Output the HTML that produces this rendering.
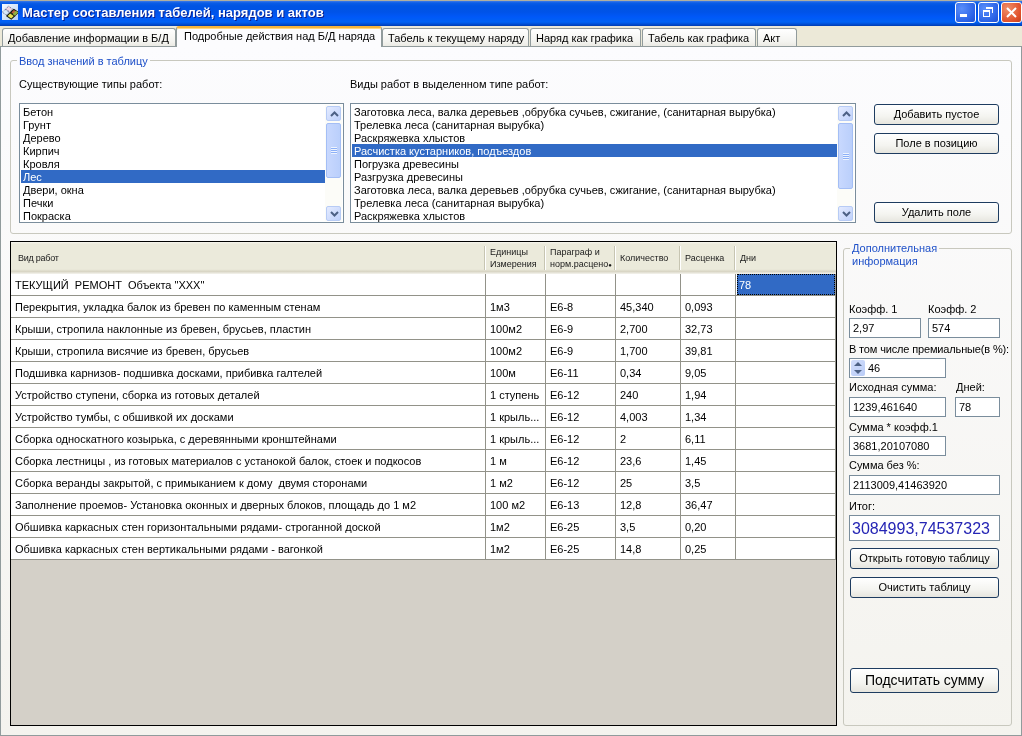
<!DOCTYPE html>
<html><head><meta charset="utf-8">
<style>
*{box-sizing:border-box;margin:0;padding:0}
html,body{will-change:transform;width:1022px;height:736px;overflow:hidden;background:#ECE9D8;font-family:"Liberation Sans",sans-serif;font-size:11px;color:#000;position:relative}
.a{position:absolute;white-space:nowrap}
#title{left:0;top:0;width:1022px;height:26px;background:linear-gradient(#B0AFA0 0,#B0AFA0 1px,#3D7BE8 1px,#0A5CE6 3px,#0054E3 6px,#0053E8 12px,#0058F8 17px,#0062F4 22px,#0050D8 24px,#003CB0 26px)}
#title .t{left:22px;top:5px;color:#fff;font-weight:bold;font-size:13px;text-shadow:1px 1px 0 #0A1E8C}
.wb{top:2px;width:21px;height:21px;border:1px solid #fff;border-radius:3px;background:radial-gradient(circle at 30% 30%,#5A8EFA,#2A62E6 70%,#2050D0)}
.wbx{background:radial-gradient(circle at 30% 30%,#F0906A,#E0502A 70%,#C0401E)}
#tabs{left:0;top:26px;width:1022px;height:21px}
.tab{position:absolute;top:2px;height:19px;border:1px solid #919B9C;border-bottom:none;border-radius:3px 3px 0 0;background:linear-gradient(#FFFFFF,#F3F3EF 70%,#E9E8E1);padding-left:5px;line-height:18px}
.tab.sel{top:0;height:21px;background:#FCFCFE;border-top:2px solid #F5B43C;box-shadow:inset 0 1px 0 #FFD880;line-height:17px;padding-left:7px;z-index:3}
#panel{left:0;top:46px;width:1022px;height:690px;background:linear-gradient(#FCFCFE,#F4F3EE);border:1px solid #919B9C}
.grp{position:absolute;border:1px solid #C8C8BE;border-radius:3px}
.gt{position:absolute;color:#1E50C8;background:#FCFCFE;padding:0 2px}
.lb{position:absolute;background:#fff;border:1px solid #7A8D9C;overflow:hidden}
.li{position:absolute;left:3px;height:13px;line-height:14px}
.li.s{background:#316AC5;color:#fff;left:1px;padding-left:2px}
.sb{position:absolute;top:1px;bottom:1px;width:17px;background:#FCFCF8}
.arr{position:absolute;left:1px;width:15px;height:15px;border:1px solid #B7CBF5;border-radius:2px;background:linear-gradient(135deg,#E4EBFF,#C0D2FC)}
.thumb{position:absolute;left:1px;width:15px;border:1px solid #A4BEF5;border-radius:2px;background:linear-gradient(90deg,#C8D8FE,#BACFFB)}
.btn{position:absolute;border:1px solid #1E3C60;border-radius:3px;background:linear-gradient(#FFFFFF,#F4F4F0 60%,#E6E5DE);text-align:center;line-height:18px}
.tb{position:absolute;background:#fff;border:1px solid #7A8D9C;padding-left:3px;line-height:19px}
#grid{left:10px;top:241px;width:827px;height:485px;background:#D4D0C8;border:1px solid #000}
.hd{position:absolute;top:0;height:32px;background:linear-gradient(#F6F5EE,#EBEADB 2px,#EBEADB 85%,#D8D5C4 92%,#F5F4EE);font-size:9px;color:#1a1a1a}
.hs{position:absolute;top:4px;width:1px;height:24px;background:#C7C5B2;box-shadow:1px 0 0 #FFFFFF}
.row{position:absolute;left:0;width:825px;height:22px;background:#fff;border-bottom:1px solid #929289}
.c{position:absolute;top:0;height:21px;line-height:23px;border-right:1px solid #929289;padding-left:4px;overflow:hidden}
.selc{position:absolute;left:1px;top:0;width:98px;height:21px;background:#316AC5;color:#fff;padding-left:2px;outline:1px dotted #000;outline-offset:-1px}
</style></head><body>
<div id="title" class="a">
  <svg class="a" style="left:2px;top:4px" width="16" height="16">
    <defs><linearGradient id="ig" x1="0" y1="0" x2="1" y2="1"><stop offset="0" stop-color="#F8FBFF"/><stop offset="1" stop-color="#B4CEF4"/></linearGradient></defs>
    <rect x="0" y="0" width="16" height="16" fill="url(#ig)"/>
    <g transform="translate(8.5 8.5) rotate(35) skewX(-12)">
      <rect x="-6" y="-4" width="5" height="4" fill="#F0D8E0" stroke="#3A3A6A" stroke-width="0.7" stroke-dasharray="1 1"/>
      <rect x="-6" y="0.5" width="5" height="4" fill="#D8E8F8" stroke="#3A3A6A" stroke-width="0.7" stroke-dasharray="1 1"/>
      <rect x="0" y="-4.5" width="5.5" height="4.5" fill="#C06040" stroke="#141A10" stroke-width="1.1"/>
      <rect x="0" y="0.5" width="5.5" height="4.5" fill="#E8E050" stroke="#141A10" stroke-width="1.1"/>
      <rect x="2.5" y="-4.5" width="3" height="4.5" fill="#90B040"/>
    </g>
  </svg>
  <div class="a t">Мастер составления табелей, нарядов и актов</div>
  <div class="a wb" style="left:955px"></div>
  <div class="a" style="left:960px;top:14px;width:7px;height:3px;background:#fff"></div>
  <div class="a wb" style="left:978px"></div>
  <div class="a" style="left:983px;top:10px;width:7px;height:7px;border:1px solid #fff;border-top-width:2px"></div>
  <div class="a" style="left:986px;top:7px;width:7px;height:6px;border:1px solid #fff;border-top-width:2px;border-left:none;border-bottom:none"></div>
  <div class="a wb wbx" style="left:1001px"></div>
  <svg class="a" style="left:1001px;top:2px" width="21" height="21"><path d="M6 6 L15 15 M15 6 L6 15" stroke="#fff" stroke-width="2"/></svg>
</div>
<div id="tabs" class="a">
  <div class="tab" style="left:2px;width:174px">Добавление информации в Б/Д</div>
  <div class="tab sel" style="left:176px;width:206px">Подробные действия над Б/Д наряда</div>
  <div class="tab" style="left:382px;width:147px">Табель к текущему наряду</div>
  <div class="tab" style="left:530px;width:111px">Наряд как графика</div>
  <div class="tab" style="left:642px;width:114px">Табель как графика</div>
  <div class="tab" style="left:757px;width:40px">Акт</div>
</div>
<div id="panel" class="a"></div>

<!-- group 1 -->
<div class="grp" style="left:10px;top:60px;width:1002px;height:174px"></div>
<div class="gt a" style="left:17px;top:55px">Ввод значений в таблицу</div>
<div class="a" style="left:19px;top:78px">Существующие типы работ:</div>
<div class="a" style="left:350px;top:78px">Виды работ в выделенном типе работ:</div>

<div class="lb" style="left:19px;top:103px;width:325px;height:120px">
  <div class="li" style="top:1px">Бетон</div>
  <div class="li" style="top:14px">Грунт</div>
  <div class="li" style="top:27px">Дерево</div>
  <div class="li" style="top:40px">Кирпич</div>
  <div class="li" style="top:53px">Кровля</div>
  <div class="li s" style="top:66px;width:304px">Лес</div>
  <div class="li" style="top:79px">Двери, окна</div>
  <div class="li" style="top:92px">Печки</div>
  <div class="li" style="top:105px">Покраска</div>
  <div class="sb" style="right:1px">
    <div class="arr" style="top:1px"><svg class="a" style="left:3px;top:4px" width="9" height="6"><path d="M1 5 L4.5 1.5 L8 5" fill="none" stroke="#4D6185" stroke-width="2"/></svg></div>
    <div class="thumb" style="top:18px;height:55px"><div class="a" style="left:4px;top:23px;width:6px;height:7px;background:repeating-linear-gradient(#EEF4FE 0 1px,#8CB0F8 1px 2px)"></div></div>
    <div class="arr" style="bottom:0px"><svg class="a" style="left:3px;top:4px" width="9" height="6"><path d="M1 1 L4.5 4.5 L8 1" fill="none" stroke="#4D6185" stroke-width="2"/></svg></div>
  </div>
</div>

<div class="lb" style="left:350px;top:103px;width:506px;height:120px">
  <div class="li" style="top:1px">Заготовка леса, валка деревьев ,обрубка сучьев, сжигание, (санитарная вырубка)</div>
  <div class="li" style="top:14px">Трелевка леса (санитарная вырубка)</div>
  <div class="li" style="top:27px">Раскряжевка хлыстов</div>
  <div class="li s" style="top:40px;width:486px">Расчистка кустарников, подъездов</div>
  <div class="li" style="top:53px">Погрузка древесины</div>
  <div class="li" style="top:66px">Разгрузка древесины</div>
  <div class="li" style="top:79px">Заготовка леса, валка деревьев ,обрубка сучьев, сжигание, (санитарная вырубка)</div>
  <div class="li" style="top:92px">Трелевка леса (санитарная вырубка)</div>
  <div class="li" style="top:105px">Раскряжевка хлыстов</div>
  <div class="sb" style="right:1px">
    <div class="arr" style="top:1px"><svg class="a" style="left:3px;top:4px" width="9" height="6"><path d="M1 5 L4.5 1.5 L8 5" fill="none" stroke="#4D6185" stroke-width="2"/></svg></div>
    <div class="thumb" style="top:18px;height:66px"><div class="a" style="left:4px;top:29px;width:6px;height:7px;background:repeating-linear-gradient(#EEF4FE 0 1px,#8CB0F8 1px 2px)"></div></div>
    <div class="arr" style="bottom:0px"><svg class="a" style="left:3px;top:4px" width="9" height="6"><path d="M1 1 L4.5 4.5 L8 1" fill="none" stroke="#4D6185" stroke-width="2"/></svg></div>
  </div>
</div>

<div class="btn" style="left:874px;top:104px;width:125px;height:21px">Добавить пустое</div>
<div class="btn" style="left:874px;top:133px;width:125px;height:21px">Поле в позицию</div>
<div class="btn" style="left:874px;top:202px;width:125px;height:21px">Удалить поле</div>

<!-- grid -->
<div id="grid" class="a">
  <div class="hd" style="left:0;width:825px;height:32px">
    <div class="a" style="left:7px;top:11px;letter-spacing:-0.25px">Вид работ</div>
    <div class="hs" style="left:473px"></div>
    <div class="a" style="left:479px;top:4px;line-height:12px">Единицы<br>Измерения</div>
    <div class="hs" style="left:533px"></div>
    <div class="a" style="left:539px;top:4px;line-height:12px;width:64px;overflow:hidden">Параграф и<br>норм.расцено<span style="font-size:6px">●</span></div>
    <div class="hs" style="left:603px"></div>
    <div class="a" style="left:609px;top:11px">Количество</div>
    <div class="hs" style="left:668px"></div>
    <div class="a" style="left:674px;top:11px">Расценка</div>
    <div class="hs" style="left:723px"></div>
    <div class="a" style="left:729px;top:11px">Дни</div>
  </div>
<div class="row" style="top:32px">
<div class="c" style="left:0px;width:475px;padding-left:4px">ТЕКУЩИЙ&nbsp; РЕМОНТ&nbsp; Объекта "XXX"</div>
<div class="c" style="left:475px;width:60px"></div>
<div class="c" style="left:535px;width:70px"></div>
<div class="c" style="left:605px;width:65px"></div>
<div class="c" style="left:670px;width:55px"></div>
<div class="c" style="left:725px;width:100px"><div class="selc">78</div></div>
</div>
<div class="row" style="top:54px">
<div class="c" style="left:0px;width:475px;padding-left:4px">Перекрытия, укладка балок из бревен по каменным стенам</div>
<div class="c" style="left:475px;width:60px">1м3</div>
<div class="c" style="left:535px;width:70px">Е6-8</div>
<div class="c" style="left:605px;width:65px">45,340</div>
<div class="c" style="left:670px;width:55px">0,093</div>
<div class="c" style="left:725px;width:100px"></div>
</div>
<div class="row" style="top:76px">
<div class="c" style="left:0px;width:475px;padding-left:4px">Крыши, стропила наклонные из бревен, брусьев, пластин</div>
<div class="c" style="left:475px;width:60px">100м2</div>
<div class="c" style="left:535px;width:70px">Е6-9</div>
<div class="c" style="left:605px;width:65px">2,700</div>
<div class="c" style="left:670px;width:55px">32,73</div>
<div class="c" style="left:725px;width:100px"></div>
</div>
<div class="row" style="top:98px">
<div class="c" style="left:0px;width:475px;padding-left:4px">Крыши, стропила висячие из бревен, брусьев</div>
<div class="c" style="left:475px;width:60px">100м2</div>
<div class="c" style="left:535px;width:70px">Е6-9</div>
<div class="c" style="left:605px;width:65px">1,700</div>
<div class="c" style="left:670px;width:55px">39,81</div>
<div class="c" style="left:725px;width:100px"></div>
</div>
<div class="row" style="top:120px">
<div class="c" style="left:0px;width:475px;padding-left:4px">Подшивка карнизов- подшивка досками, прибивка галтелей</div>
<div class="c" style="left:475px;width:60px">100м</div>
<div class="c" style="left:535px;width:70px">Е6-11</div>
<div class="c" style="left:605px;width:65px">0,34</div>
<div class="c" style="left:670px;width:55px">9,05</div>
<div class="c" style="left:725px;width:100px"></div>
</div>
<div class="row" style="top:142px">
<div class="c" style="left:0px;width:475px;padding-left:4px">Устройство ступени, сборка из готовых деталей</div>
<div class="c" style="left:475px;width:60px">1 ступень</div>
<div class="c" style="left:535px;width:70px">Е6-12</div>
<div class="c" style="left:605px;width:65px">240</div>
<div class="c" style="left:670px;width:55px">1,94</div>
<div class="c" style="left:725px;width:100px"></div>
</div>
<div class="row" style="top:164px">
<div class="c" style="left:0px;width:475px;padding-left:4px">Устройство тумбы, с обшивкой их досками</div>
<div class="c" style="left:475px;width:60px">1 крыль...</div>
<div class="c" style="left:535px;width:70px">Е6-12</div>
<div class="c" style="left:605px;width:65px">4,003</div>
<div class="c" style="left:670px;width:55px">1,34</div>
<div class="c" style="left:725px;width:100px"></div>
</div>
<div class="row" style="top:186px">
<div class="c" style="left:0px;width:475px;padding-left:4px">Сборка односкатного козырька, с деревянными кронштейнами</div>
<div class="c" style="left:475px;width:60px">1 крыль...</div>
<div class="c" style="left:535px;width:70px">Е6-12</div>
<div class="c" style="left:605px;width:65px">2</div>
<div class="c" style="left:670px;width:55px">6,11</div>
<div class="c" style="left:725px;width:100px"></div>
</div>
<div class="row" style="top:208px">
<div class="c" style="left:0px;width:475px;padding-left:4px">Сборка лестницы , из готовых материалов с устанокой балок, стоек и подкосов</div>
<div class="c" style="left:475px;width:60px">1 м</div>
<div class="c" style="left:535px;width:70px">Е6-12</div>
<div class="c" style="left:605px;width:65px">23,6</div>
<div class="c" style="left:670px;width:55px">1,45</div>
<div class="c" style="left:725px;width:100px"></div>
</div>
<div class="row" style="top:230px">
<div class="c" style="left:0px;width:475px;padding-left:4px">Сборка веранды закрытой, с примыканием к дому&nbsp; двумя сторонами</div>
<div class="c" style="left:475px;width:60px">1 м2</div>
<div class="c" style="left:535px;width:70px">Е6-12</div>
<div class="c" style="left:605px;width:65px">25</div>
<div class="c" style="left:670px;width:55px">3,5</div>
<div class="c" style="left:725px;width:100px"></div>
</div>
<div class="row" style="top:252px">
<div class="c" style="left:0px;width:475px;padding-left:4px">Заполнение проемов- Установка оконных и дверных блоков, площадь до 1 м2</div>
<div class="c" style="left:475px;width:60px">100 м2</div>
<div class="c" style="left:535px;width:70px">Е6-13</div>
<div class="c" style="left:605px;width:65px">12,8</div>
<div class="c" style="left:670px;width:55px">36,47</div>
<div class="c" style="left:725px;width:100px"></div>
</div>
<div class="row" style="top:274px">
<div class="c" style="left:0px;width:475px;padding-left:4px">Обшивка каркасных стен горизонтальными рядами- строганной доской</div>
<div class="c" style="left:475px;width:60px">1м2</div>
<div class="c" style="left:535px;width:70px">Е6-25</div>
<div class="c" style="left:605px;width:65px">3,5</div>
<div class="c" style="left:670px;width:55px">0,20</div>
<div class="c" style="left:725px;width:100px"></div>
</div>
<div class="row" style="top:296px">
<div class="c" style="left:0px;width:475px;padding-left:4px">Обшивка каркасных стен вертикальными рядами - вагонкой</div>
<div class="c" style="left:475px;width:60px">1м2</div>
<div class="c" style="left:535px;width:70px">Е6-25</div>
<div class="c" style="left:605px;width:65px">14,8</div>
<div class="c" style="left:670px;width:55px">0,25</div>
<div class="c" style="left:725px;width:100px"></div>
</div>
</div>

<!-- right group -->
<div class="grp" style="left:843px;top:248px;width:169px;height:478px"></div>
<div class="gt a" style="left:850px;top:242px;line-height:13px;background:linear-gradient(#FAF9F9 8px,transparent 8px)">Дополнительная<br>информация</div>
<div class="a" style="left:849px;top:303px">Коэфф. 1</div>
<div class="a" style="left:928px;top:303px">Коэфф. 2</div>
<div class="tb" style="left:849px;top:318px;width:72px;height:20px">2,97</div>
<div class="tb" style="left:928px;top:318px;width:72px;height:20px">574</div>
<div class="a" style="left:849px;top:343px;letter-spacing:-0.15px">В том числе премиальные(в %):</div>
<div class="tb" style="left:849px;top:358px;width:97px;height:20px;padding-left:18px">46</div>
<div class="a" style="left:851px;top:360px;width:14px;height:16px;border-radius:2px;background:linear-gradient(135deg,#D2DEFB,#B9CCF7)"></div>
<svg class="a" style="left:851px;top:360px" width="14" height="16"><path d="M3 6 L7 2 L11 6 Z M3 10 L7 14 L11 10 Z" fill="#4D6185"/></svg>
<div class="a" style="left:849px;top:381px">Исходная сумма:</div>
<div class="a" style="left:956px;top:381px">Дней:</div>
<div class="tb" style="left:849px;top:397px;width:97px;height:20px">1239,461640</div>
<div class="tb" style="left:955px;top:397px;width:45px;height:20px">78</div>
<div class="a" style="left:849px;top:421px">Сумма * коэфф.1</div>
<div class="tb" style="left:849px;top:436px;width:97px;height:20px">3681,20107080</div>
<div class="a" style="left:849px;top:459px">Сумма без %:</div>
<div class="tb" style="left:849px;top:475px;width:151px;height:20px">2113009,41463920</div>
<div class="a" style="left:849px;top:500px">Итог:</div>
<div class="tb" style="left:849px;top:515px;width:151px;height:26px;font-size:16px;line-height:26px;color:#2424B4;padding-left:2px">3084993,74537323</div>
<div class="btn" style="left:850px;top:548px;width:149px;height:21px">Открыть готовую таблицу</div>
<div class="btn" style="left:850px;top:577px;width:149px;height:21px">Очистить таблицу</div>
<div class="btn" style="left:850px;top:668px;width:149px;height:25px;font-size:14px;line-height:22px">Подсчитать сумму</div>
</body></html>
